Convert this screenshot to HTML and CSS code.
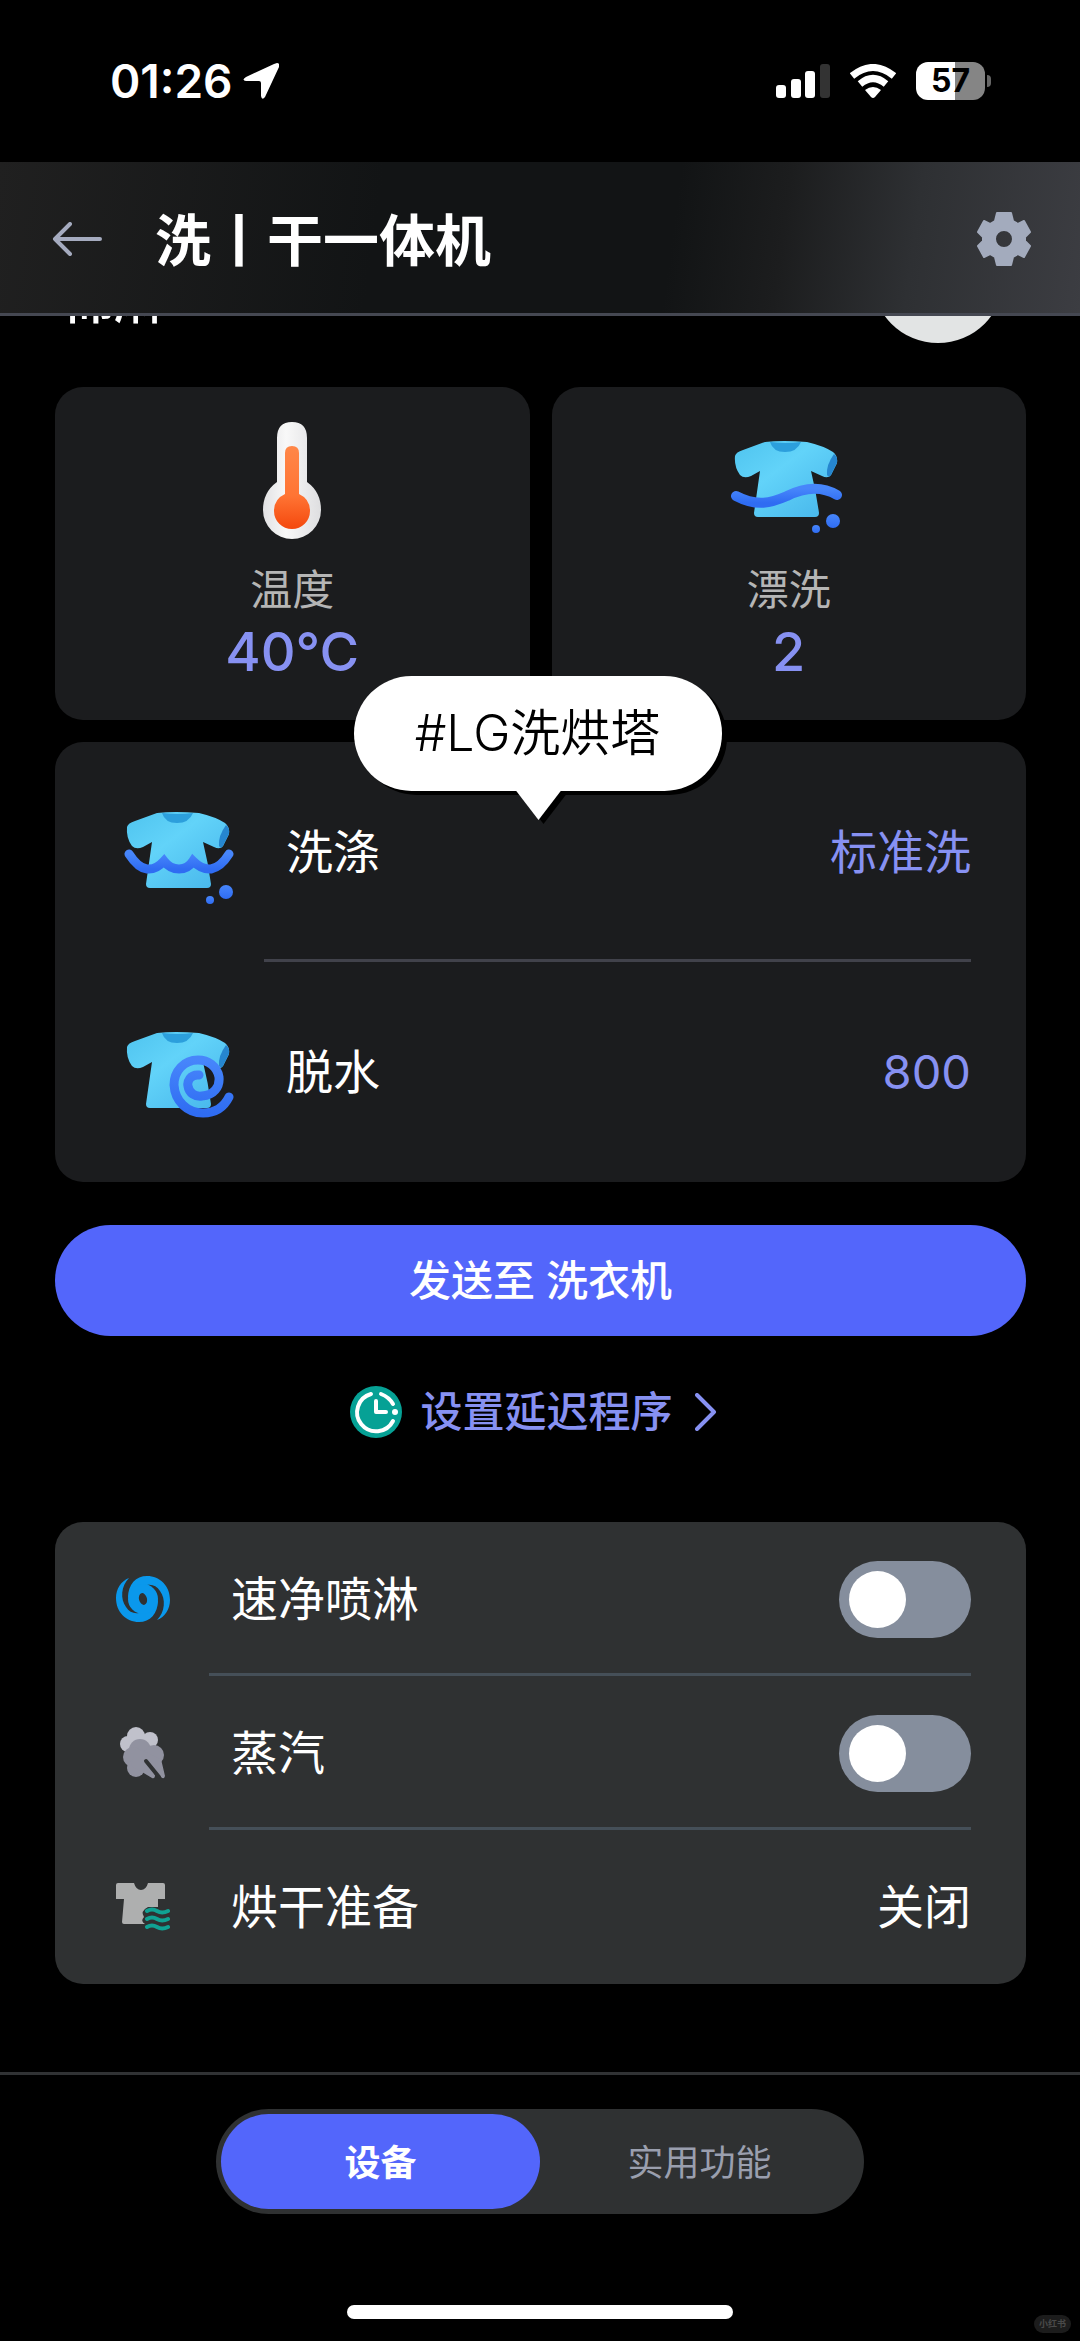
FILE: index.html
```html
<!DOCTYPE html>
<html lang="zh-CN">
<head>
<meta charset="utf-8">
<meta name="viewport" content="width=device-width, initial-scale=1">
<title>洗丨干一体机</title>
<link rel="stylesheet" href="styles.css">
</head>
<body>
<svg class="defs" aria-hidden="true">
  <defs>
    <linearGradient id="cloth" x1="0" y1="0" x2="1" y2="1">
      <stop offset="0" stop-color="#4fc4ef"/><stop offset=".4" stop-color="#62d3f9"/><stop offset="1" stop-color="#45b4ea"/>
    </linearGradient>
    <linearGradient id="water" x1="0" y1="0" x2="0" y2="1">
      <stop offset="0" stop-color="#4786fb"/><stop offset="1" stop-color="#2f6cf2"/>
    </linearGradient>
    <linearGradient id="hot" x1="0" y1="0" x2="0" y2="1">
      <stop offset="0" stop-color="#ff8748"/><stop offset=".6" stop-color="#ff7434"/><stop offset="1" stop-color="#f4480d"/>
    </linearGradient>
    <linearGradient id="glass" x1="0" y1="0" x2="1" y2="0">
      <stop offset="0" stop-color="#e2e2e4"/><stop offset=".4" stop-color="#f8f8f8"/><stop offset="1" stop-color="#dedee0"/>
    </linearGradient>
    <g id="shirt">
      <path d="M33 1Q50 -1 75 1Q92 5 101 11Q106 15 105 22L99 34Q96 38 90 35L79 30Q84 50 87 72Q87 76 83 76H26Q22 76 22 72L28 30L19 35Q12 38 8 34Q2 26 3 15Q4 11 11 9Z" fill="url(#cloth)"/>
      <path d="M102 13Q106 16 105 22L99 34Q97 37 95 34Q94 24 102 13Z" fill="#2686cf"/>
      <path d="M38 1Q54 3 69 1Q65 11 53 11Q41 11 38 1Z" fill="#2c9fdc"/>
    </g>
  </defs>
</svg>

<div class="status">
  <div class="status-left">
    <span class="clock">01:26</span>
    <svg class="locate" viewBox="0 0 36 36"><path d="M34 0Q37 0 36 4L22 34Q19 38 18 33V20Q18 18 16 18H3Q-2 17 3 14L31 1Z" fill="#fff"/></svg>
  </div>
  <div class="status-right">
    <svg class="signal" viewBox="0 0 54 34"><g fill="#fff"><rect y="21" width="10" height="13" rx="3"/><rect x="15" y="15" width="10" height="19" rx="3"/><rect x="29" y="7" width="10" height="27" rx="3"/></g><rect x="44" width="10" height="34" rx="3" fill="#333"/></svg>
    <svg class="wifi" viewBox="0 0 46 34"><g fill="none" stroke="#fff" stroke-width="7"><path d="M2 12Q23 -5 44 12"/><path d="M10 20Q23 9 36 20"/></g><path d="M15 26Q23 20 31 26L25 33Q23 35 21 33Z" fill="#fff"/></svg>
    <div class="battery"><span>57</span></div>
  </div>
</div>

<header class="appbar">
  <button class="icon-btn" aria-label="返回"><svg class="back" viewBox="0 0 50 34"><path d="M18 2L3 17L18 32M3 17H48" fill="none" stroke="#a5abbf" stroke-width="4" stroke-linecap="round" stroke-linejoin="round"/></svg></button>
  <h1>洗丨干一体机</h1>
  <button class="icon-btn" aria-label="设置"><svg class="gear" viewBox="0 0 54 54"><path d="M20 1H34L36 9L41 12L47 9L53 20L48 25V29L53 34L47 45L41 42L36 45L34 53H20L18 45L13 42L7 45L1 34L6 29V25L1 20L7 9L13 12L18 9ZM27 18A9 9 0 1 0 27 36A9 9 0 1 0 27 18Z" fill="#a3abbd" fill-rule="evenodd" stroke="#a3abbd" stroke-width="2" stroke-linejoin="round"/></svg></button>
</header>

<main class="content">
  <div class="course"><span class="course-name">棉麻</span><span class="course-dial"></span></div>

  <section class="tiles">
    <button class="tile">
      <svg class="tile-icon" viewBox="0 0 120 120"><path d="M60 2Q75 2 75 18V62Q89 72 89 90A29 29 0 0 1 31 90Q31 72 45 62V18Q45 2 60 2Z" fill="url(#glass)"/><path d="M60 26Q67 26 67 33V74Q78 79 78 91A18 18 0 0 1 42 91Q42 79 53 74V33Q53 26 60 26Z" fill="url(#hot)"/></svg>
      <span class="tile-label">温度</span>
      <span class="tile-value">40°C</span>
    </button>
    <button class="tile">
      <svg class="tile-icon" viewBox="0 0 120 120"><use href="#shirt" x="3" y="21"/><path d="M7 76C28 87 42 83 58 76Q86 62 108 75" fill="none" stroke="url(#water)" stroke-width="10" stroke-linecap="round"/><circle cx="104" cy="101" r="7" fill="url(#water)"/><circle cx="87" cy="109" r="4" fill="url(#water)"/></svg>
      <span class="tile-label">漂洗</span>
      <span class="tile-value">2</span>
    </button>
    <div class="tag">#LG洗烘塔</div>
  </section>

  <section class="card cycle">
    <button class="row">
      <svg class="row-icon" viewBox="0 0 110 110"><use href="#shirt" x="0" y="15"/><path d="M5 57Q14 71 23 72Q32 73 40 64Q46 72 55 72Q64 72 69 64Q78 73 87 72Q97 70 105 57" fill="none" stroke="url(#water)" stroke-width="9" stroke-linecap="round"/><circle cx="102" cy="95" r="7" fill="url(#water)"/><circle cx="86" cy="103" r="4" fill="url(#water)"/></svg>
      <span class="row-name">洗涤</span><span class="row-value">标准洗</span>
    </button>
    <button class="row">
      <svg class="row-icon" viewBox="0 0 110 110"><use href="#shirt" x="0" y="15"/><path d="M75 58C66 57 63 65 64 69C65 76 71 80 78 79C90 78 96 70 95 60C93 49 84 43 74 43C60 43 50 54 50 68C51 84 63 96 79 96C91 96 100 90 105 80" fill="none" stroke="url(#water)" stroke-width="9" stroke-linecap="round"/></svg>
      <span class="row-name">脱水</span><span class="row-value">800</span>
    </button>
  </section>

  <button class="send">发送至 洗衣机</button>

  <a class="delay" href="#">
    <svg class="delay-icon" viewBox="0 0 52 52"><circle cx="26" cy="26" r="26" fill="#06a195"/><g fill="none" stroke="#fff" stroke-width="4" stroke-linecap="round" stroke-linejoin="round"><path d="M21 8A19 19 0 1 0 43 35"/><path d="M31 8Q39 11 43 18"/><path d="M26 15V26H36"/></g><circle cx="45" cy="26" r="3" fill="#fff"/></svg>
    <span>设置延迟程序</span>
    <svg class="chevron" viewBox="0 0 22 38"><path d="M2 2L19 19L2 36" fill="none" stroke="#8791f2" stroke-width="4" stroke-linecap="round" stroke-linejoin="round"/></svg>
  </a>

  <section class="card options">
    <label class="row">
      <svg class="opt-icon" viewBox="0 0 54 54"><defs><path id="arm" d="M12 26C12 12 20 4 31 4C44 4 54 14 54 28C54 37 49 45 41 48C49 40 50 27 44 19C41 14 36 12 31 13Z"/></defs><g fill="#0a98ec"><use href="#arm"/><use href="#arm" transform="rotate(180 27 27)"/><circle cx="27" cy="27" r="15"/></g><ellipse cx="27" cy="27" rx="4" ry="6" fill="#2f3132" transform="rotate(-15 27 27)"/></svg>
      <span class="row-name">速净喷淋</span><input class="switch" type="checkbox" role="switch">
    </label>
    <label class="row">
      <svg class="opt-icon" viewBox="0 0 54 54"><g fill="#c0c1cb"><circle cx="20" cy="10" r="9"/><circle cx="34" cy="14" r="8"/><circle cx="12" cy="18" r="8"/></g><g fill="#9192a0"><circle cx="24" cy="24" r="11"/><circle cx="38" cy="29" r="10"/><circle cx="17" cy="31" r="10"/><circle cx="20" cy="42" r="9"/><path d="M20 22L45 33L49 50Q48 54 45 51L32 38L39 49Q39 53 36 52L26 46L15 40Z"/></g><path d="M30 35L43 51" stroke="#2f3132" stroke-width="4" stroke-linecap="round"/></svg>
      <span class="row-name">蒸汽</span><input class="switch" type="checkbox" role="switch">
    </label>
    <button class="row">
      <svg class="opt-icon" viewBox="0 0 54 54"><path d="M2 3H18Q20 10 25 10Q30 10 32 3H47Q49 3 49 5V19H42V27H32Q24 31 28 37Q24 41 29 44H8Q6 44 6 42L8 19H0V5Q0 3 2 3Z" fill="#aeafaf"/><path d="M31 31Q36 28 41 31T52 31M31 39Q36 36 41 39T52 39M31 47Q36 44 41 47T52 47" fill="none" stroke="#10a293" stroke-width="4" stroke-linecap="round"/></svg>
      <span class="row-name">烘干准备</span><span class="row-value plain">关闭</span>
    </button>
  </section>
</main>

<footer class="bottom">
  <nav class="segments">
    <button class="segment active">设备</button>
    <button class="segment">实用功能</button>
  </nav>
  <div class="home-bar"></div>
  <span class="mark">小红书</span>
</footer>
</body>
</html>
```
FILE: styles.css
```css
* { box-sizing: border-box; }

body {
  margin: 0;
  min-height: 100vh;
  display: flex;
  flex-direction: column;
  background: #000;
  color: #fff;
  font-family: Inter, "Noto Sans CJK SC", sans-serif;
}

button {
  margin: 0;
  padding: 0;
  border: 0;
  background: none;
  color: inherit;
  font: inherit;
}

svg { display: block; flex: none; }
.defs { position: absolute; width: 0; height: 0; }

/* Status bar */
.status {
  height: 162px;
  padding: 0 95px 0 110px;
  display: flex;
  align-items: center;
  justify-content: space-between;
}
.status-left, .status-right { display: flex; align-items: center; }
.status-left { gap: 10px; }
.clock { font-size: 46px; line-height: 56px; font-weight: 600; }
.locate { width: 36px; height: 36px; }
.status-right { gap: 20px; }
.signal { width: 54px; height: 34px; }
.wifi { width: 46px; height: 34px; }
.battery {
  position: relative;
  width: 69px;
  height: 38px;
  border-radius: 12px;
  background: linear-gradient(90deg, #fff 57%, #858585 57%);
  color: #000;
  font-size: 32px;
  line-height: 38px;
  font-weight: 700;
  text-align: center;
}
.battery::after {
  content: "";
  position: absolute;
  top: 13px;
  right: -6px;
  width: 4px;
  height: 12px;
  border-radius: 0 4px 4px 0;
  background: #666;
}

/* App bar */
.appbar {
  height: 154px;
  padding: 2px 49px 0 52px;
  display: flex;
  align-items: center;
  border-bottom: 3px solid #454852;
  background: linear-gradient(98deg, #202020 0%, #121415 35%, #121415 62%, #1c1d1e 72%, #2e3033 84%, #3c3d42 100%);
}
.appbar h1 {
  flex: 1;
  margin: 0 0 0 53px;
  padding-top: 4px;
  font-size: 56px;
  line-height: 72px;
  font-weight: 600;
}
.back { width: 50px; height: 34px; }
.gear { width: 54px; height: 54px; }

/* Scrolled content */
.content { padding: 0 54px 0 55px; }
.course {
  height: 71px;
  display: flex;
  align-items: flex-start;
  justify-content: space-between;
  padding: 0 22px 0 5px;
  clip-path: inset(0);
}
.course-name { margin-top: -48px; font-size: 54px; line-height: 64px; font-weight: 500; }
.course-dial {
  width: 132px;
  height: 132px;
  margin-top: -105px;
  border-radius: 50%;
  background: #e2e4e4;
}

.tiles {
  position: relative;
  display: grid;
  grid-template-columns: 1fr 1fr;
  gap: 22px;
  margin-bottom: 22px;
}
.tile {
  display: flex;
  flex-direction: column;
  align-items: center;
  height: 333px;
  padding-top: 33px;
  border-radius: 28px;
  background: #1b1c1e;
}
.tile-icon { width: 120px; height: 120px; }
.tile-label { margin-top: 22px; font-size: 42px; line-height: 56px; color: #b5b5b5; }
.tile-value { font-size: 54px; line-height: 68px; font-weight: 500; color: #8791f2; }

.tag {
  position: absolute;
  left: 50%;
  bottom: -71px;
  width: 368px;
  height: 115px;
  margin-left: -187px;
  border-radius: 58px;
  background: #fff;
  color: #000;
  font-size: 50px;
  line-height: 115px;
  text-align: center;
  font-weight: 350;
  filter: drop-shadow(5px 4px 0 #000);
  z-index: 1;
}
.tag::after {
  content: "";
  position: absolute;
  top: 114px;
  left: 162px;
  width: 46px;
  height: 30px;
  background: #fff;
  clip-path: polygon(0 0, 100% 0, 50% 100%);
}

.card { border-radius: 28px; }
.row {
  display: flex;
  align-items: center;
  width: 100%;
  padding-right: 55px;
  text-align: left;
  position: relative;
  font-size: 47px;
  line-height: 60px;
}
.row-name { flex: 1; }
.row-value { color: #8791f2; }
.row-value.plain { color: #fff; }
.row + .row::before {
  content: "";
  position: absolute;
  top: -3px;
  right: 55px;
  height: 3px;
}

.cycle { background: #1b1c1e; }
.cycle .row { height: 220px; padding-left: 69px; gap: 52px; }
.cycle .row + .row::before { left: 209px; background: #41424b; }
.row-icon { width: 110px; height: 110px; }

.send {
  display: block;
  width: 100%;
  height: 111px;
  margin-top: 43px;
  border-radius: 56px;
  background: #5366fb;
  font-size: 42px;
  line-height: 56px;
  font-weight: 500;
}

.delay {
  display: flex;
  align-items: center;
  justify-content: center;
  height: 56px;
  margin: 48px 0 82px;
  padding-right: 14px;
  color: #8791f2;
  font-size: 42px;
  line-height: 56px;
  font-weight: 500;
  text-decoration: none;
}
.delay-icon { width: 52px; height: 52px; margin-right: 18px; }
.chevron { width: 22px; height: 38px; margin-left: 22px; }

.options { background: #2f3132; }
.options .row { height: 154px; padding-left: 61px; gap: 61px; }
.options .row + .row::before { left: 154px; background: #454f58; }
.opt-icon { width: 54px; height: 54px; }

.switch {
  appearance: none;
  flex: none;
  width: 132px;
  height: 77px;
  margin: 0;
  padding: 10px;
  border-radius: 39px;
  background: #858e9d;
}
.switch::before {
  content: "";
  display: block;
  width: 57px;
  height: 57px;
  border-radius: 50%;
  background: #fff;
}
.switch:checked { background: #5366fb; }
.switch:checked::before { margin-left: auto; }

/* Bottom navigation */
.bottom {
  position: relative;
  flex: 1;
  display: flex;
  flex-direction: column;
  align-items: center;
  justify-content: space-between;
  margin-top: 88px;
  padding: 34px 0 22px;
  border-top: 3px solid #303234;
}
.segments {
  display: flex;
  width: 60%;
  height: 105px;
  padding: 5px;
  border-radius: 53px;
  background: #2f3132;
}
.segment {
  flex: 1;
  padding-bottom: 4px;
  border-radius: 48px;
  color: #9a9fae;
  font-size: 36px;
}
.segment.active { background: #5366fb; color: #fff; font-weight: 700; }
.home-bar { width: 386px; height: 14px; border-radius: 7px; background: #fff; }
.mark {
  position: absolute;
  right: 9px;
  bottom: 8px;
  padding: 0 5px;
  border-radius: 9px;
  background: #1c1c1c;
  color: #4a4a4a;
  font-size: 9px;
  line-height: 18px;
  font-weight: 700;
}
```
